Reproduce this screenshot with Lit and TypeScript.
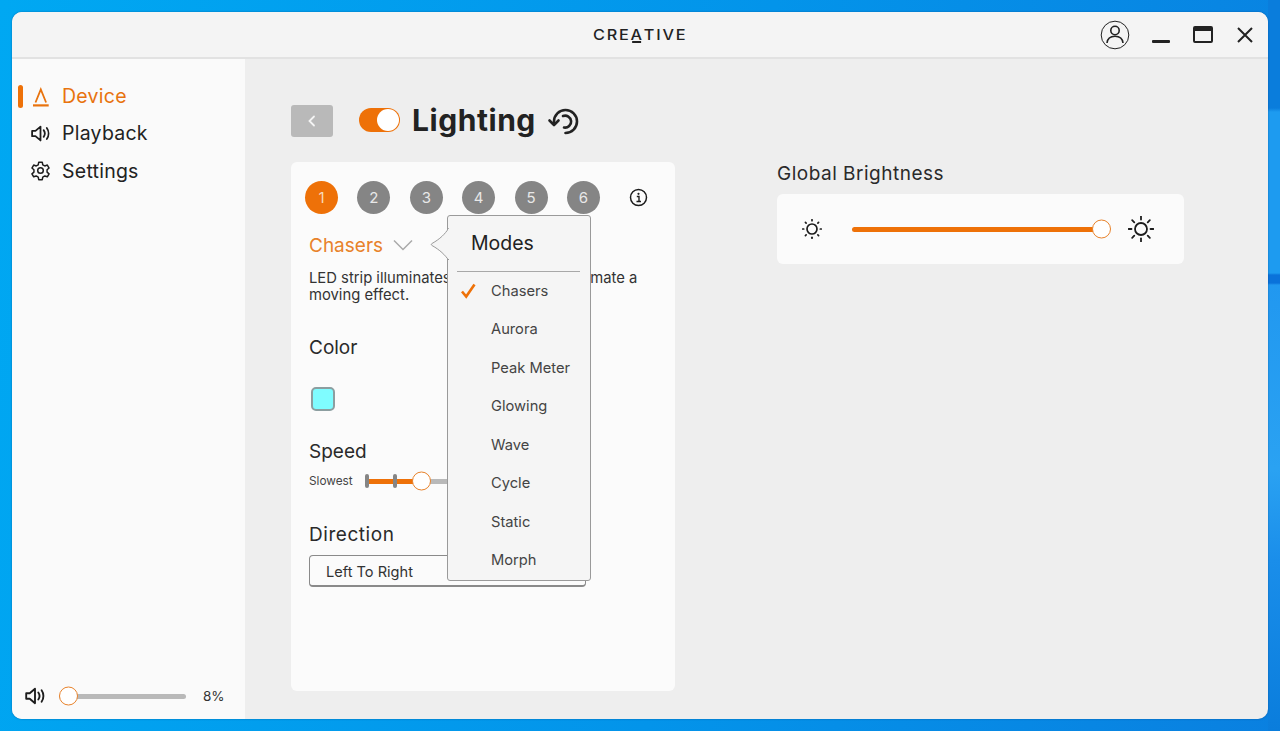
import { LitElement, html, css, svg } from 'lit';
import { customElement } from 'lit/decorators.js';

const MODES = ['Chasers', 'Aurora', 'Peak Meter', 'Glowing', 'Wave', 'Cycle', 'Static', 'Morph'];
const PRESETS = [1, 2, 3, 4, 5, 6];

const speakerIcon = svg`<path d="M2 7.500v5h3.200L10 16.600V3.400L5.200 7.500z" fill="none" stroke="#1d1d1d" stroke-width="1.700" stroke-linejoin="round"/><path d="M13 6.800c1.300 1.800 1.300 4.600 0 6.400M16 4.800c2.200 3 2.200 7.400 0 10.400" fill="none" stroke="#1d1d1d" stroke-width="1.700" stroke-linecap="round"/>`;

const sunRays = (cx: number, cy: number, r1: number, r2: number, n: number, w: number) =>
  Array.from({ length: n }, (_, i) => {
    const a = (i * 2 * Math.PI) / n;
    return svg`<line x1=${cx + r1 * Math.cos(a)} y1=${cy + r1 * Math.sin(a)} x2=${cx + r2 * Math.cos(a)} y2=${cy + r2 * Math.sin(a)} stroke="#1d1d1d" stroke-width=${w} stroke-linecap="round"/>`;
  });

@customElement('app-root')
export class AppRoot extends LitElement {
  static styles = css`
    :host {
      display: block;
      width: 1280px;
      height: 731px;
      box-sizing: border-box;
      padding: 12px;
      overflow: hidden;
      font-family: Inter, 'Open Sans', sans-serif;
      color: #222;
      background:
        linear-gradient(
            180deg,
            #0a7ddc 0,
            #0a7ddc 108px,
            #1d9bf0 112px,
            #1d9bf0 273px,
            #0a72da 275px,
            #0a72da 283px,
            #2198f0 285px,
            #2aa2f2 470px,
            #1a8eea 560px,
            #0a7ddc 731px
          )
          right / 12px 100% no-repeat,
        linear-gradient(100deg, #00a8f2 0%, #0394ea 55%, #0a80e0 100%);
    }
    .window {
      height: 100%;
      display: flex;
      flex-direction: column;
      border-radius: 10px;
      overflow: hidden;
      background: #eeeeee;
      box-shadow: 0 0 2px rgba(0, 50, 110, 0.55);
    }
    .titlebar {
      height: 47px;
      box-sizing: border-box;
      flex: none;
      background: #f4f4f4;
      border-bottom: 2px solid #e2e2e2;
      display: grid;
      grid-template-columns: 1fr auto 1fr;
      align-items: center;
    }
    .logo {
      grid-column: 2;
      font-size: 14.5px;
      font-weight: 500;
      letter-spacing: 1.6px;
      color: #222;
      transform: scaleX(1.12);
    }
    .logo-a {
      position: relative;
    }
    .logo-a::after {
      content: '';
      position: absolute;
      left: 1px;
      right: 2.5px;
      bottom: 0;
      height: 2px;
      background: #222;
    }
    .win-controls {
      grid-column: 3;
      justify-self: end;
      display: flex;
      align-items: center;
      gap: 22px;
      padding-right: 15px;
    }
    .body {
      flex: 1;
      display: flex;
      min-height: 0;
    }
    .sidebar {
      width: 233px;
      flex: none;
      background: #fafafa;
      display: flex;
      flex-direction: column;
      box-sizing: border-box;
      padding: 22px 0 11px;
    }
    .nav {
      display: flex;
      flex-direction: column;
      gap: 7.300px;
      flex: 1;
    }
    .nav-item {
      height: 30px;
      display: flex;
      align-items: center;
      gap: 11px;
      padding-left: 18px;
      font-size: 19.500px;
      letter-spacing: 0.25px;
      position: relative;
    }
    .nav-item svg {
      flex: none;
    }
    .nav-item.active {
      color: #e8730e;
    }
    .nav-item.active::before {
      content: '';
      position: absolute;
      left: 6px;
      top: 3.500px;
      width: 5px;
      height: 23px;
      border-radius: 3px;
      background: #ee7108;
    }
    .volume {
      display: flex;
      align-items: center;
      padding-left: 12px;
      height: 24px;
    }
    .volume-track {
      position: relative;
      width: 127px;
      height: 5px;
      margin-left: 13px;
      border-radius: 3px;
      background: #b9b9b9;
    }
    .volume-pct {
      margin-left: 17px;
      font-size: 13.500px;
      color: #333;
    }
    .thumb {
      position: absolute;
      top: 50%;
      width: 19px;
      height: 19px;
      transform: translateY(-50%);
      box-sizing: border-box;
      border: 1.500px solid #e8822a;
      border-radius: 50%;
      background: #fff;
    }
    .main {
      flex: 1;
      box-sizing: border-box;
      padding: 45px 0 28px 46px;
      display: flex;
      flex-direction: column;
      min-width: 0;
    }
    .head {
      height: 34px;
      display: flex;
      align-items: center;
      flex: none;
    }
    .back {
      width: 42px;
      height: 32px;
      border-radius: 3px;
      background: #b9b9b9;
      display: flex;
      align-items: center;
      justify-content: center;
    }
    .toggle {
      position: relative;
      width: 41px;
      height: 24px;
      margin: -2px 0 0 26px;
      border-radius: 12px;
      background: #ee7108;
    }
    .toggle::after {
      content: '';
      position: absolute;
      right: 1px;
      top: 1px;
      width: 22px;
      height: 22px;
      border-radius: 50%;
      background: #fff;
    }
    h1 {
      margin: -3px 0 0 12px;
      font-size: 30px;
      font-weight: 700;
      letter-spacing: 0.55px;
      color: #222;
    }
    .reset {
      margin-left: 11px;
      display: block;
    }
    .columns {
      flex: 1;
      display: flex;
      margin-top: 24px;
      min-height: 0;
    }
    .card {
      position: relative;
      width: 384px;
      flex: none;
      box-sizing: border-box;
      padding: 19px 14px 0 14px;
      border-radius: 6px;
      background: #fbfbfb;
    }
    .presets {
      display: flex;
      align-items: center;
    }
    .preset {
      width: 33px;
      height: 33px;
      margin-right: 19.400px;
      border-radius: 50%;
      background: #858585;
      color: #e8e8e8;
      font-size: 15px;
      display: flex;
      align-items: center;
      justify-content: center;
    }
    .preset.active {
      background: #ee7108;
      color: #f8d9bc;
    }
    .info {
      margin-left: 10px;
      display: block;
    }
    .mode-select {
      display: flex;
      align-items: center;
      gap: 10px;
      margin: 19px 0 0 4px;
      font-size: 19px;
      color: #e8822a;
      height: 24px;
    }
    .desc {
      margin: 13px 0 0 4px;
      width: 335px;
      font-size: 14.800px;
      line-height: 17px;
      color: #333;
    }
    .section {
      margin: 0 0 0 4px;
      font-size: 19px;
      line-height: 24px;
      color: #2a2a2a;
    }
    .section.wide {
      letter-spacing: 0.55px;
    }
    .swatch {
      display: block;
      width: 24px;
      height: 24px;
      margin: 27px 0 0 6px;
      box-sizing: border-box;
      border: 2px solid #8c9ea0;
      border-radius: 5px;
      background: #7ffcff;
    }
    .speed-row {
      display: flex;
      align-items: center;
      margin: 9px 0 0 4px;
      height: 16px;
    }
    .speed-label {
      width: 56px;
      font-size: 11.800px;
      color: #444;
    }
    .speed-track {
      position: relative;
      width: 130px;
      height: 5px;
      background: #b9b9b9;
    }
    .speed-fill {
      position: absolute;
      inset: 0 auto 0 0;
      height: 5px;
      background: #ee7108;
    }
    .tick {
      position: absolute;
      top: -4.500px;
      width: 4px;
      height: 14px;
      border-radius: 2px;
      background: #858585;
    }
    .dropdown {
      box-sizing: border-box;
      width: 277px;
      height: 32px;
      margin: 8px 0 0 4px;
      padding: 7px 16px;
      border: 1px solid #8a8a8a;
      border-bottom-width: 2px;
      border-radius: 4px;
      font-size: 14.600px;
      color: #333;
    }
    .popover {
      position: absolute;
      left: 156px;
      top: 53px;
      width: 144px;
      height: 366px;
      box-sizing: border-box;
      border: 1px solid #9a9a9a;
      border-radius: 3px;
      background: #f5f5f5;
    }
    .popover-arrow {
      position: absolute;
      left: -18px;
      top: 12px;
      display: block;
    }
    .popover-title {
      height: 56px;
      box-sizing: border-box;
      font-size: 19.500px;
      color: #222;
      border-bottom: 1px solid #a8a8a8;
      margin: 0 10px 0 9px;
      padding: 15px 0 0 14px;
    }
    .popover-list {
      list-style: none;
      margin: -0.5px 0 0;
      padding: 0;
    }
    .popover-list li {
      position: relative;
      height: 38.500px;
      padding-left: 43px;
      display: flex;
      align-items: center;
      font-size: 14.700px;
      color: #444;
    }
    .popover-list svg {
      position: absolute;
      left: 12px;
      top: 11px;
    }
    .brightness {
      margin-left: 102px;
      width: 407px;
    }
    .brightness-title {
      font-size: 19px;
      letter-spacing: 0.5px;
      line-height: 24px;
      color: #2a2a2a;
    }
    .brightness-card {
      height: 70px;
      margin-top: 8px;
      border-radius: 6px;
      background: #fbfbfb;
      display: flex;
      align-items: center;
      padding-left: 25px;
    }
    .brightness-track {
      position: relative;
      width: 249px;
      height: 5px;
      margin-left: 30px;
      border-radius: 3px;
      background: #ee7108;
    }
    .brightness-card .sun-big {
      margin-left: 27px;
    }
  `;

  render() {
    return html`
      <div class="window">
        <header class="titlebar">
          <div class="logo">CRE<span class="logo-a">A</span>TIVE</div>
          <div class="win-controls">
            <svg width="30" height="30" viewBox="0 0 30 30">
              <circle cx="15" cy="15" r="13.800" fill="none" stroke="#222" stroke-width="1"/>
              <circle cx="15" cy="10.500" r="4.200" fill="none" stroke="#222" stroke-width="1.600"/>
              <path d="M7 23c.4-4.400 3.400-6.800 8-6.800s7.600 2.400 8 6.800" fill="none" stroke="#222" stroke-width="1.600"/>
            </svg>
            <svg width="18" height="20" viewBox="0 0 18 20" style="margin-top:2px"><rect y="14" width="18" height="3" rx="1" fill="#222"/></svg>
            <svg width="20" height="17" viewBox="0 0 20 17" style="margin-left:1px"><rect x="1" y="1" width="18" height="15" rx="1" fill="none" stroke="#222" stroke-width="2"/><rect x="1" y="1" width="18" height="4" fill="#222"/></svg>
            <svg width="16" height="16" viewBox="0 0 16 16" style="margin-left:2px"><path d="M1 1l14 14M15 1L1 15" stroke="#222" stroke-width="2" fill="none"/></svg>
          </div>
        </header>
        <div class="body">
          <aside class="sidebar">
            <nav class="nav">
              <div class="nav-item active">
                <svg width="21" height="21" viewBox="0 0 21 21"><path d="M5.500 16.500L10.800 3.500l5.300 13" fill="none" stroke="#e8730e" stroke-width="1.800"/><rect x="3" y="18.300" width="15.700" height="2.200" fill="#e8730e"/></svg>
                Device
              </div>
              <div class="nav-item">
                <svg width="21" height="21" viewBox="0 0 20 20">${speakerIcon}</svg>
                Playback
              </div>
              <div class="nav-item">
                <svg width="21" height="21" viewBox="0 0 24 24" fill="none" stroke="#1d1d1d" stroke-width="1.700" stroke-linejoin="round">
                  <circle cx="12" cy="12" r="3.200"/>
                  <path d="M10 2.500h4l.6 3 2.300 1.300 2.900-1 2 3.400-2.300 2v2.600l2.300 2-2 3.400-2.900-1-2.300 1.300-.6 3h-4l-.6-3-2.300-1.300-2.900 1-2-3.400 2.300-2v-2.600l-2.300-2 2-3.400 2.900 1 2.300-1.300z"/>
                </svg>
                Settings
              </div>
            </nav>
            <div class="volume">
              <svg width="22" height="22" viewBox="0 0 20 20">${speakerIcon}</svg>
              <div class="volume-track"><span class="thumb" style="left:0"></span></div>
              <span class="volume-pct">8%</span>
            </div>
          </aside>
          <main class="main">
            <div class="head">
              <div class="back">
                <svg width="12" height="14" viewBox="0 0 12 14"><path d="M8 2.500L3.500 7 8 11.500" fill="none" stroke="#f4f4f4" stroke-width="1.800" stroke-linecap="round"/></svg>
              </div>
              <div class="toggle"></div>
              <h1>Lighting</h1>
              <svg class="reset" width="32" height="32" viewBox="0 0 32 32" fill="none" stroke="#222" stroke-width="2.600" stroke-linecap="round" stroke-linejoin="round">
                <path d="M7 19.500V16.500a11.500 11.500 0 1 1 11.500 11.500"/>
                <path d="M16 11a6 6 0 1 1 1 11.500"/>
                <path d="M2.500 15.500L7 20l4.500-4.500"/>
              </svg>
            </div>
            <div class="columns">
              <section class="card">
                <div class="presets">
                  ${PRESETS.map(
                    (n) => html`<div class="preset ${n === 1 ? 'active' : ''}">${n}</div>`
                  )}
                  <svg class="info" width="19" height="19" viewBox="0 0 19 19">
                    <circle cx="9.500" cy="9.500" r="8" fill="none" stroke="#1d1d1d" stroke-width="1.500"/>
                    <circle cx="9.500" cy="5.800" r="1.100" fill="#1d1d1d"/>
                    <path d="M7.800 8.500h2.200v5M7.500 13.500h4.500" fill="none" stroke="#1d1d1d" stroke-width="1.400"/>
                  </svg>
                </div>
                <div class="mode-select">
                  Chasers
                  <svg width="20" height="12" viewBox="0 0 20 12"><path d="M1 1.500l9 9 9-9" fill="none" stroke="#a9a9a9" stroke-width="1.500"/></svg>
                </div>
                <p class="desc">LED strip illuminates in sequences to animate a moving effect.</p>
                <div class="section" style="margin-top:32px">Color</div>
                <span class="swatch"></span>
                <div class="section" style="margin-top:29px">Speed</div>
                <div class="speed-row">
                  <span class="speed-label">Slowest</span>
                  <div class="speed-track">
                    <div class="speed-fill" style="width:56px"></div>
                    <span class="tick" style="left:0"></span>
                    <span class="tick" style="left:28px"></span>
                    <span class="thumb" style="left:47px"></span>
                  </div>
                </div>
                <div class="section wide" style="margin-top:34px">Direction</div>
                <div class="dropdown">Left To Right</div>
                <div class="popover">
                  <svg class="popover-arrow" width="19" height="32" viewBox="0 0 19 32">
                    <path d="M18.500 0.500C15 6 10 11 2 15.500c-1 .6-1 1.400 0 2 8 4.500 13 9.500 16.500 14.500z" fill="#f5f5f5" stroke="#9a9a9a" stroke-width="1"/>
                    <rect x="18" y="1" width="1.500" height="30" fill="#f5f5f5"/>
                  </svg>
                  <div class="popover-title">Modes</div>
                  <ul class="popover-list">
                    ${MODES.map(
                      (m, i) => html`<li>
                        ${i === 0
                          ? html`<svg width="16" height="16" viewBox="0 0 16 16"><path d="M2 8.500l4.200 5L14.500 1.500" fill="none" stroke="#ee7108" stroke-width="2.600"/></svg>`
                          : ''}
                        ${m}
                      </li>`
                    )}
                  </ul>
                </div>
              </section>
              <section class="brightness">
                <div class="brightness-title">Global Brightness</div>
                <div class="brightness-card">
                  <svg width="20" height="20" viewBox="0 0 20 20">
                    <circle cx="10" cy="10" r="5" fill="none" stroke="#1d1d1d" stroke-width="1.700"/>
                    ${sunRays(10, 10, 8.300, 9.300, 8, 1.700)}
                  </svg>
                  <div class="brightness-track"><span class="thumb" style="right:-9.500px"></span></div>
                  <svg class="sun-big" width="26" height="26" viewBox="0 0 26 26">
                    <circle cx="13" cy="13" r="6" fill="none" stroke="#1d1d1d" stroke-width="1.800"/>
                    ${sunRays(13, 13, 9.500, 12.500, 8, 1.800)}
                  </svg>
                </div>
              </section>
            </div>
          </main>
        </div>
      </div>
    `;
  }
}
